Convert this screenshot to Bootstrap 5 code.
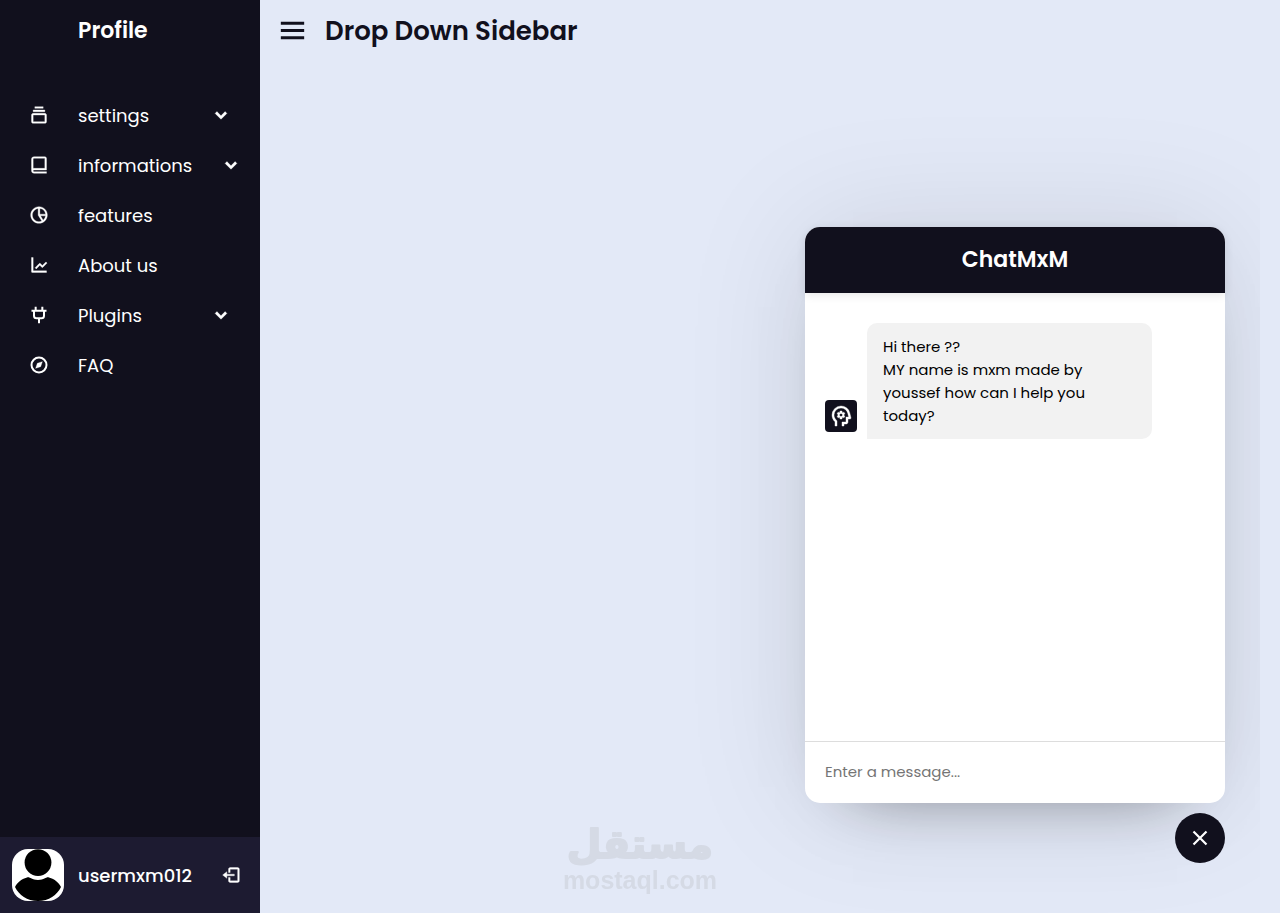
<!DOCTYPE html>
<html lang="en">
<head>
<meta charset="utf-8">
<meta name="viewport" content="width=device-width, initial-scale=1">
<title>Drop Down Sidebar</title>
<link href="https://cdn.jsdelivr.net/npm/bootstrap@5.3.0/dist/css/bootstrap.min.css" rel="stylesheet">
<style>
  body { font-family: Poppins, Inter, sans-serif; background: #e3e9f7; color: #11101d; }
  svg { fill: currentColor; flex: none; display: block; }
  a { color: inherit; text-decoration: none; }
  .sidebar { width: 260px; background: #11101d; color: #fff; }
  .sidebar button svg, .icon-col svg { stroke: currentColor; stroke-width: .4; }
  .brand-row { height: 60px; padding-left: 78px; font-size: 22px; font-weight: 600; }
  .side-menu { padding-top: 30px; }
  .side-menu li { height: 50px; }
  .icon-col { width: 78px; display: flex; justify-content: center; }
  .side-label { font-size: 18px; min-width: 118px; padding-right: 14px; box-sizing: border-box; white-space: nowrap; }
  .arrow-btn { width: 50px; height: 50px; display: flex; align-items: center; justify-content: center; }
  .plain-btn { background: none; border: 0; padding: 0; color: inherit; }
  .profile-bar { height: 76px; background: #1d1b31; padding: 0 19px 0 12px; }
  .avatar { width: 52px; height: 52px; border-radius: 16px; background: #fff; overflow: hidden; }
  .user-name { font-size: 18px; font-weight: 500; margin-left: 14px; }
  .home { margin-right: 20px; overflow: hidden; }
  .home-head { height: 61px; padding-left: 15px; gap: 15px; }
  .home-head h1 { font-size: 26px; line-height: 36px; font-weight: 600; }
  .chat-panel { position: absolute; right: 35px; bottom: 110px; width: 420px; background: #fff; border-radius: 15px;
    box-shadow: 0 0 128px rgba(0,0,0,.1), 0 32px 64px -48px rgba(0,0,0,.5); }
  .chat-head { height: 66px; background: #11101d; color: #fff; border-radius: 15px 15px 0 0; box-shadow: 0 2px 10px rgba(0,0,0,.1); }
  .chat-head h2 { font-size: 22px; line-height: 34px; font-weight: 600; }
  .chat-log { height: 448px; padding: 30px 20px; }
  .bot-row { gap: 10px; }
  .bot-icon { width: 32px; height: 32px; border-radius: 4px; background: #11101d; color: #fff; margin-bottom: 7px; }
  .bot-icon svg { stroke: currentColor; stroke-width: 16; }
  .bubble { width: 285px; padding: 12px 16px; background: #f2f2f2; color: #000; border-radius: 10px 10px 10px 0; font-size: 15px; line-height: 23px; }
  .chat-entry { height: 62px; border-top: 1px solid #ddd; padding: 0 20px; }
  .chat-entry input { width: 100%; border: 0; outline: 0; background: none; font-size: 15px; padding: 0; }
  .chat-entry input::placeholder { color: #757575; opacity: 1; }
  .chat-toggle { position: absolute; right: 35px; bottom: 50px; width: 50px; height: 50px; border-radius: 50%; background: #11101d; color: #fff; }
  .watermark { position: fixed; left: 50%; bottom: 17px; width: 160px; margin-left: -80px; color: #d5dae5; pointer-events: none; }
  .watermark svg text { font-weight: 700; }
  .mark-arabic { stroke: currentColor; stroke-width: 2; stroke-linejoin: round; }
</style>
</head>
<body>
<div class="d-flex min-vh-100">
  <nav class="sidebar d-flex flex-column flex-shrink-0" aria-label="Main">
    <div class="brand-row d-flex align-items-center">Profile</div>
    <ul class="side-menu list-unstyled mb-0 flex-grow-1">
      <li class="d-flex align-items-center">
        <a href="#" class="d-flex align-items-center"><span class="icon-col"><svg width="20" height="20" viewBox="0 0 24 24"><path d="M19 10H5c-1.103 0-2 .897-2 2v8c0 1.103.897 2 2 2h14c1.103 0 2-.897 2-2v-8c0-1.103-.897-2-2-2zM5 20v-8h14l.002 8H5zM5 6h14v2H5zm2-4h10v2H7z"/></svg></span><span class="side-label">settings</span></a>
        <button class="plain-btn arrow-btn" aria-label="Open settings"><svg width="20" height="20" viewBox="0 0 24 24"><path d="M16.939 7.939 12 12.879l-4.939-4.94-2.122 2.122L12 17.121l7.061-7.06z"/></svg></button>
      </li>
      <li class="d-flex align-items-center">
        <a href="#" class="d-flex align-items-center"><span class="icon-col"><svg width="20" height="20" viewBox="0 0 24 24"><path d="M6 22h15v-2H6.012C5.55 19.988 5 19.805 5 19s.55-.988 1.012-1H21V4c0-1.103-.897-2-2-2H6c-1.206 0-3 .799-3 3v14c0 2.201 1.794 3 3 3zM5 8V5c0-.805.55-.988 1-1h13v12H5V8z"/></svg></span><span class="side-label">informations</span></a>
        <button class="plain-btn arrow-btn" aria-label="Open informations"><svg width="20" height="20" viewBox="0 0 24 24"><path d="M16.939 7.939 12 12.879l-4.939-4.94-2.122 2.122L12 17.121l7.061-7.06z"/></svg></button>
      </li>
      <li class="d-flex align-items-center">
        <a href="#" class="d-flex align-items-center"><span class="icon-col"><svg width="20" height="20" viewBox="0 0 24 24"><path d="M12 2C6.486 2 2 6.486 2 12c0 5.515 4.486 10 10 10s10-4.485 10-10c0-5.514-4.486-10-10-10zm7.931 9H13V4.069A8.008 8.008 0 0 1 19.931 11zM4 12c0-4.072 3.061-7.436 7-7.931V12a.996.996 0 0 0 .111.438c.015.03.022.063.041.093l4.202 6.723A7.949 7.949 0 0 1 12 20c-4.411 0-8-3.589-8-8zm13.052 6.196L13.805 13h6.126a7.992 7.992 0 0 1-2.879 5.196z"/></svg></span><span class="side-label">features</span></a>
      </li>
      <li class="d-flex align-items-center">
        <a href="#" class="d-flex align-items-center"><span class="icon-col"><svg width="20" height="20" viewBox="0 0 24 24"><path d="M3 3v17a1 1 0 0 0 1 1h17v-2H5V3H3z"/><path d="M15.293 14.707a.999.999 0 0 0 1.414 0l5-5-1.414-1.414L16 12.586l-2.293-2.293a.999.999 0 0 0-1.414 0l-5 5 1.414 1.414L13 12.414l2.293 2.293z"/></svg></span><span class="side-label">About us</span></a>
      </li>
      <li class="d-flex align-items-center">
        <a href="#" class="d-flex align-items-center"><span class="icon-col"><svg width="20" height="20" viewBox="0 0 24 24"><path d="M8 2v4M16 2v4M3 7h18M6 7v6a3 3 0 0 0 3 3h6a3 3 0 0 0 3-3V7M12 16v6" fill="none" stroke="currentColor" stroke-width="2.400"/></svg></span><span class="side-label">Plugins</span></a>
        <button class="plain-btn arrow-btn" aria-label="Open plugins"><svg width="20" height="20" viewBox="0 0 24 24"><path d="M16.939 7.939 12 12.879l-4.939-4.94-2.122 2.122L12 17.121l7.061-7.06z"/></svg></button>
      </li>
      <li class="d-flex align-items-center">
        <a href="#" class="d-flex align-items-center"><span class="icon-col"><svg width="20" height="20" viewBox="0 0 24 24"><circle cx="12" cy="12" r="9" fill="none" stroke="currentColor" stroke-width="2.400"/><path d="m8 16 5.991-2L16 8l-6 2z"/></svg></span><span class="side-label">FAQ</span></a>
      </li>
    </ul>
    <div class="profile-bar d-flex align-items-center">
      <div class="avatar flex-shrink-0"><svg width="52" height="52" viewBox="0 0 52 52" role="img" aria-label="User photo"><g fill="#000"><circle cx="26" cy="13.600" r="13.400"/><path d="M15 28.500C18 27.500 19 31 26 31s8-3.500 11-2.500c6 1.500 9.500 5 12 9.500C45 46 37 52 26 52S7 46 3 38c2.500-4.500 6-8 12-9.500z"/></g></svg></div>
      <span class="user-name">usermxm012</span>
      <button class="plain-btn ms-auto" aria-label="Log out"><svg width="20" height="20" viewBox="0 0 24 24"><path d="m2 12 5 4v-3h9v-2H7V8z"/><path d="M20 3h-9c-1.103 0-2 .897-2 2v4h2V5h9v14h-9v-4H9v4c0 1.103.897 2 2 2h9c1.103 0 2-.897 2-2V5c0-1.103-.897-2-2-2z"/></svg></button>
    </div>
  </nav>

  <main class="home position-relative flex-grow-1">
    <header class="home-head d-flex align-items-center">
      <button class="plain-btn" aria-label="Toggle sidebar"><svg width="35" height="35" viewBox="0 0 24 24"><path d="M4 6h16v2H4zm0 5h16v2H4zm0 5h16v2H4z"/></svg></button>
      <h1 class="mb-0">Drop Down Sidebar</h1>
    </header>

    <section class="chat-panel" aria-label="Chat">
      <header class="chat-head d-flex align-items-center justify-content-center"><h2 class="mb-0">ChatMxM</h2></header>
      <div class="chat-log">
        <div class="bot-row d-flex align-items-end">
          <span class="bot-icon d-flex align-items-center justify-content-center flex-shrink-0"><svg width="24" height="24" viewBox="0 -960 960 960"><path d="M240-80v-172q-57-52-88.500-121.500T120-520q0-150 105-255t255-105q125 0 221.500 73.500T827-615l52 205q5 19-7 34.500T840-360h-80v120q0 33-23.500 56.500T680-160h-80v80h-80v-160h160v-200h108l-38-155q-23-91-98-148t-172-57q-116 0-198 81t-82 197q0 60 24.500 114t69.500 96l26 24v208h-80Z"/><path d="M440-360h80l6-50q8-3 14.500-7t11.500-9l46 20 40-68-40-30q2-8 2-16t-2-16l40-30-40-68-46 20q-5-5-11.500-9t-14.500-7l-6-50h-80l-6 50q-8 3-14.500 7t-11.500 9l-46-20-40 68 40 30q-2 8-2 16t2 16l-40 30 40 68 46-20q5 5 11.500 9t14.500 7l6 50Zm40-100q-25 0-42.500-17.500T420-520q0-25 17.500-42.500T480-580q25 0 42.500 17.500T540-520q0 25-17.500 42.500T480-460Z"/></svg></span>
          <p class="bubble mb-0">Hi there ??<br>MY name is mxm made by youssef how can I help you today?</p>
        </div>
      </div>
      <div class="chat-entry d-flex align-items-center"><input type="text" placeholder="Enter a message..." aria-label="Enter a message"></div>
    </section>
    <button class="chat-toggle plain-btn d-flex align-items-center justify-content-center" aria-label="Close chat"><svg width="24" height="24" viewBox="0 0 24 24"><path d="m5.500 5.500 13 13m0-13-13 13" fill="none" stroke="currentColor" stroke-width="2.200"/></svg></button>
  </main>
</div>

<div class="watermark">
  <svg width="160" height="76" viewBox="0 0 160 76" role="img" aria-label="mostaql.com">
    <text class="mark-arabic" x="80" y="38" text-anchor="middle" direction="rtl" font-family="DejaVu Sans, sans-serif" font-size="40">مستقل</text>
    <text x="80" y="69" text-anchor="middle" font-family="Liberation Sans, sans-serif" font-size="25">mostaql.com</text>
  </svg>
</div>
<script src="https://cdn.jsdelivr.net/npm/bootstrap@5.3.0/dist/js/bootstrap.bundle.min.js"></script>
</body>
</html>
